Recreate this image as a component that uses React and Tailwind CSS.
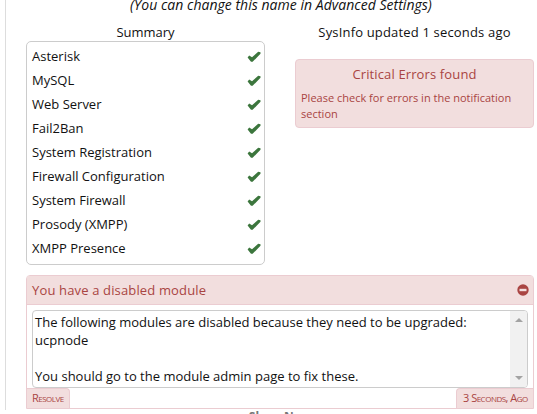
import React from 'react';

const services = [
  'Asterisk',
  'MySQL',
  'Web Server',
  'Fail2Ban',
  'System Registration',
  'Firewall Configuration',
  'System Firewall',
  'Prosody (XMPP)',
  'XMPP Presence',
];

function Check() {
  return (
    <svg viewBox="0 0 14 12" className="h-3 w-3.5 shrink-0" fill="#3c763d">
      <path d="M0.6 6.6 2.2 4.6 5 6.2 11.2 0.8 13.5 1.2V2.8L5.6 10.8H4Z" />
    </svg>
  );
}

function Summary() {
  return (
    <div className="w-[239px]">
      <div className="h-[18px] text-center leading-[18px]">Summary</div>
      <ul className="h-[224px] rounded-[5px] border border-[#ccc] pt-[3px] pr-[3px] pl-[5px]">
        {services.map((name) => (
          <li key={name} className="flex h-6 items-center justify-between">
            <span>{name}</span>
            <Check />
          </li>
        ))}
      </ul>
    </div>
  );
}

function SysInfo() {
  return (
    <div className="w-[239px]">
      <div className="h-[36px] text-center leading-[18px] tracking-[0.17px]">SysInfo updated 1 seconds ago</div>
      <div className="h-[69px] rounded-[4px] border border-[#ebccd1] bg-[#f2dede] px-[5px] pt-[5px] text-[#a94442]">
        <div className="text-center leading-[18px] tracking-[0.13px]">Critical Errors found</div>
        <p className="mt-[7px] text-[11px] leading-4">Please check for errors in the notification section</p>
      </div>
    </div>
  );
}

function Notice() {
  return (
    <section className="mt-[10px] flex h-[134px] w-[508px] flex-col rounded-t-[4px] border border-[#ebccd1] text-[#a94442]">
      <header className="flex h-[29px] shrink-0 items-center justify-between border-b border-[#ebccd1] bg-[#f2dede] pr-1 pl-[5px]">
        <span className="pt-px tracking-[0.15px]">You have a disabled module</span>
        <svg viewBox="0 0 12 12" className="h-3 w-3">
          <circle cx="6" cy="6" r="5.7" fill="#a94442" />
          <rect x="2.5" y="4.8" width="7" height="2.4" fill="#f2dede" />
        </svg>
      </header>
      <div className="mx-[5px] mt-[5px] flex h-[78px] shrink-0 overflow-hidden rounded-[4px] border border-[#ccc] text-[#111]">
        <p className="flex-1 pt-[2px] pl-[2px] leading-[18px] whitespace-pre-line">
          {'The following modules are disabled because they need to be upgraded:\nucpnode\n\nYou should go to the module admin page to fix these.'}
        </p>
        <div className="flex w-[17px] flex-col items-center justify-between bg-[#f1f1f1] pt-[7px] pb-[7px]">
          <svg viewBox="0 0 8 4" className="h-1 w-2" fill="#a3a3a3">
            <path d="M0 4 4 0 8 4Z" />
          </svg>
          <svg viewBox="0 0 8 4" className="h-1 w-2" fill="#a3a3a3">
            <path d="M0 0 4 4 8 0Z" />
          </svg>
        </div>
      </div>
      <footer className="flex h-5 justify-between text-[11px] leading-[18px] tracking-[-0.5px] [font-variant:small-caps]">
        <span className="w-[43px] rounded-tr-[4px] border-t border-r border-[#ebccd1] bg-[#f2dede] pl-[5px] whitespace-nowrap">Resolve</span>
        <span className="w-[77px] rounded-tl-[4px] border-t border-l border-[#ebccd1] bg-[#f2dede] pl-[6px] whitespace-nowrap">3 Seconds, Ago</span>
      </footer>
    </section>
  );
}

export default function App() {
  return (
    <div className="h-[414px] w-[537px] overflow-hidden bg-white pl-[5px] font-['Open_Sans',sans-serif] text-[13px] text-[#111]">
      <main className="h-[414px] border-l border-[#ddd] pl-5">
        <div className="-mt-1 h-[22px] text-center text-[14px] leading-[18px] tracking-[0.03px] italic">
          <span className="mr-[1px]">(You can change this name in Advanced Settings)</span>
        </div>
        <div className="flex gap-[30px] pt-[5px]">
          <Summary />
          <SysInfo />
        </div>
        <Notice />
        <div className="-mt-px w-[508px] text-center text-xs leading-[17px] font-bold text-[#777]">Show New</div>
      </main>
    </div>
  );
}
